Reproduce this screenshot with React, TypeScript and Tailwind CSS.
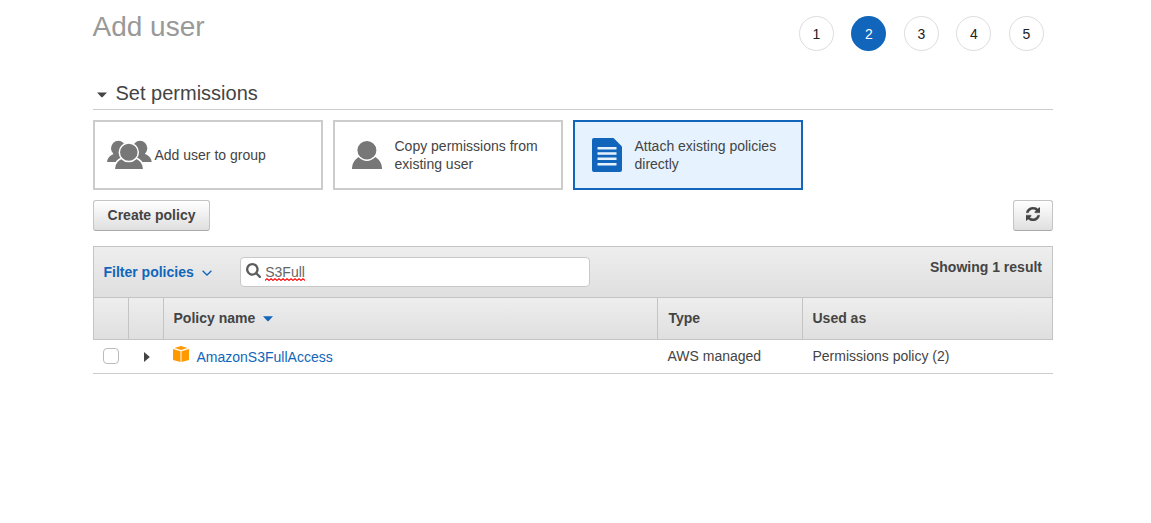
import React from "react";

const CARD = "flex h-[70px] w-[230px] items-center border-2 text-sm leading-[18px]";

function GroupIcon() {
  return (
    <svg width="46" height="30" viewBox="0 0 46 30" className="shrink-0" fill="#777">
      <path d="M0 22C.3 18.500 2.500 15.500 6.500 14L16 12V22Z" />
      <path d="M44.700 22C44.400 18.500 42.200 15.500 38.200 14L28 12V22Z" />
      <ellipse cx="11.300" cy="8.200" rx="7.300" ry="7.500" />
      <ellipse cx="33" cy="8.200" rx="7.300" ry="7.500" />
      <path d="M7.200 30V28.500C7.500 23.500 10.500 19.500 16 17.500H28C33.500 19.500 36.500 23.500 36.800 28.500V30Z" stroke="#fff" strokeWidth="1.800" />
      <ellipse cx="21.800" cy="12.300" rx="9.500" ry="9.300" stroke="#fff" strokeWidth="1.500" />
      <rect x="6" y="29" width="32" height="1" fill="#fff" />
    </svg>
  );
}

function UserIcon() {
  return (
    <svg width="30" height="28" viewBox="0 0 30 28" className="shrink-0" fill="#777">
      <path d="M0 28C0 21.500 3.500 17.500 8.500 15H21.500C26.500 17.500 30 21.500 30 28Z" />
      <ellipse cx="14.900" cy="9.300" rx="10.200" ry="10" stroke="#fff" strokeWidth="1.400" />
    </svg>
  );
}

function DocumentIcon() {
  return (
    <svg width="30" height="34" viewBox="0 0 30 34" className="shrink-0">
      <path d="M2 0H21.500L30 8.500V32Q30 34 28 34H2Q0 34 0 32V2Q0 0 2 0Z" fill="#1166bb" />
      <path d="M5.500 10.300H24.500M5.500 15.500H24.500M5.500 20.800H24.500M5.500 26.200H24.500" stroke="#e6f3ff" strokeWidth="2.500" />
    </svg>
  );
}

function SearchIcon() {
  return (
    <svg width="15" height="15" viewBox="64 128 1664 1664" fill="#5c5c5c">
      <path d="M1216 832q0-185-131.500-316.500t-316.500-131.500-316.500 131.500-131.500 316.500 131.500 316.500 316.500 131.500 316.500-131.500 131.500-316.500zm512 832q0 52-38 90t-90 38q-54 0-90-38l-343-342q-179 124-399 124-143 0-273.500-55.500t-225-150-150-225-55.500-273.500 55.500-273.500 150-225 225-150 273.500-55.500 273.500 55.500 225 150 150 225 55.500 273.500q0 220-124 399l343 343q37 37 37 90z" />
    </svg>
  );
}

function RefreshIcon() {
  return (
    <svg width="14" height="14" viewBox="0 0 1536 1536" fill="#444" stroke="#444" strokeWidth="40">
      <path d="M1511 928q0 5-1 7-64 268-268 434.500t-478 166.500q-146 0-282.500-55t-243.500-157l-129 129q-19 19-45 19t-45-19-19-45v-448q0-26 19-45t45-19h448q26 0 45 19t19 45-19 45l-137 137q71 66 161 102t187 36q134 0 250-65t186-179q11-17 53-117 8-23 30-23h192q13 0 22.500 9.500t9.500 22.500zm25-800v448q0 26-19 45t-45 19h-448q-26 0-45-19t-19-45 19-45l138-138q-148-137-349-137-134 0-250 65t-186 179q-11 17-53 117-8 23-30 23h-199q-13 0-22.500-9.500t-9.500-22.500v-7q65-268 270-434.500t480-166.500q146 0 284 55.500t245 156.500l130-129q19-19 45-19t45 19 19 45z" />
    </svg>
  );
}

function PolicyIcon() {
  return (
    <svg width="16" height="16" viewBox="0 0 16 16" className="shrink-0" fill="#ff9900">
      <path d="M8 0L14.500 2L8 4L1.500 2Z" />
      <path d="M0 3L7.500 5.200V16L0 14Z" />
      <path d="M16 3L8.500 5.200V16L16 14Z" />
    </svg>
  );
}

function Squiggle() {
  const points = Array.from({ length: 21 }, (_, i) => `${i * 2},${i % 2 ? 0.7 : 2.5}`).join(" ");
  return (
    <svg width="40" height="3" viewBox="0 0 40 3" className="absolute bottom-[-1px] left-0" fill="none" stroke="#f00" strokeWidth="1.100">
      <polyline points={points} />
    </svg>
  );
}

export default function App() {
  const button =
    "flex h-[31px] items-center justify-center rounded-[3px] border border-[#c4c4c4] border-b-[#aaa] bg-gradient-to-b from-white to-[#dfdfdf]";
  const head = "flex items-center bg-gradient-to-b from-[#eeeeee] to-[#dfdfdf] pb-0.5 pl-2.5";
  return (
    <main className="h-[523px] w-[1151px] bg-white pl-[93px] font-['Liberation_Sans',Arial,sans-serif] text-sm text-[#444]">
      <div className="w-[960px]">
        <header className="flex h-[78px] justify-between pr-[9.2px]">
          <h1 className="-ml-[0.5px] mt-[11px] text-[28px] leading-8 text-[#999]">Add user</h1>
          <ol className="mt-4 flex gap-[17.5px]">
            {[1, 2, 3, 4, 5].map((n) => (
              <li
                key={n}
                className={
                  n === 2
                    ? "flex size-[35px] items-center justify-center rounded-full bg-[#1166bb] pt-px text-white"
                    : "flex size-[35px] items-center justify-center rounded-full border border-[#ddd] pt-px text-[#222]"
                }
              >
                {n}
              </li>
            ))}
          </ol>
        </header>

        <h2 className="flex h-8 items-center border-b border-[#ccc] pl-1 text-xl leading-[28px]">
          <svg width="10" height="6" viewBox="0 0 10 6" className="mr-[8.5px] mt-[3px]" fill="#444">
            <path d="M0 .5H10L5.700 5Q5 5.600 4.300 5Z" />
          </svg>
          <span className="-mt-0.5">Set permissions</span>
        </h2>

        <div className="mt-2.5 flex gap-2.5">
          <div className={CARD + " border-[#ccc] pl-3"}>
            <GroupIcon />
            <span className="ml-[1.5px]">Add user to group</span>
          </div>
          <div className={CARD + " border-[#ccc] pl-[17px]"}>
            <UserIcon />
            <span className="ml-[12.5px]">
              Copy permissions from
              <br />
              existing user
            </span>
          </div>
          <div className={CARD + " border-[#1166bb] bg-[#e6f3ff] pl-[17px]"}>
            <DocumentIcon />
            <span className="ml-[12.5px]">
              Attach existing policies
              <br />
              directly
            </span>
          </div>
        </div>

        <div className="mt-2.5 flex justify-between">
          <button className={button + " w-[117px] pb-0.5 font-bold"}>Create policy</button>
          <button aria-label="Refresh" className={button + " w-10 pb-[3px]"}>
            <RefreshIcon />
          </button>
        </div>

        <section className="mt-[15px] border border-b-0 border-[#c4c4c4]">
          <div className="flex h-[50px] items-center bg-gradient-to-b from-[#eeeeee] to-[#dfdfdf] pl-[9.5px] pr-2.5">
            <span className="font-bold text-[#1166bb]">Filter policies</span>
            <svg width="10" height="6" viewBox="0 0 10 6" className="ml-2 mt-[2px]" fill="none" stroke="#1166bb" strokeWidth="1.300">
              <path d="M.6 .7L5 5L9.400 .7" />
            </svg>
            <div className="ml-[28px] flex h-[30px] w-[350px] items-center rounded-[4px] border border-[#c8c8c8] bg-white pl-[5.5px] text-[#666]">
              <span className="-mt-[3px]">
                <SearchIcon />
              </span>
              <span className="relative ml-1 leading-4">
                S3Full
                <Squiggle />
              </span>
            </div>
            <span className="mb-[10px] ml-auto font-bold">Showing 1 result</span>
          </div>
          <div className="grid h-[43px] grid-cols-[34px_34px_493px_144px_1fr] gap-px border-y border-[#c4c4c4] bg-[#c4c4c4] font-bold">
            <div className={head} />
            <div className={head} />
            <div className={head}>
              <span className="-ml-[0.5px]">Policy name</span>
              <svg width="10" height="6" viewBox="0 0 10 6" className="ml-[7.5px] mt-[3px]" fill="#1166bb">
                <path d="M0 .3H10L5.600 5.100Q5 5.600 4.400 5.100Z" />
              </svg>
            </div>
            <div className={head}>
              <span className="ml-[0.5px]">Type</span>
            </div>
            <div className={head}>
              <span className="-ml-[0.5px]">Used as</span>
            </div>
          </div>
        </section>
        <div className="grid h-[34px] grid-cols-[35px_35px_494px_145px_1fr] items-center border-b border-[#ccc] pb-0.5">
          <span className="ml-[10px] size-4 rounded-[4px] border border-[#bbb] bg-white" />
          <svg width="6" height="10" viewBox="0 0 6 10" className="ml-4 mt-[2px]" fill="#444">
            <path d="M0 0L5.300 4.400Q5.800 5 5.300 5.600L0 10Z" />
          </svg>
          <div className="flex items-center pl-2.5 text-[#1166bb]">
            <span className="-mt-[3px]">
              <PolicyIcon />
            </span>
            <span className="ml-[7.5px] mt-[2px]">AmazonS3FullAccess</span>
          </div>
          <span className="pl-[10.5px]">AWS managed</span>
          <span className="pl-[10.5px]">Permissions policy (2)</span>
        </div>
      </div>
    </main>
  );
}
